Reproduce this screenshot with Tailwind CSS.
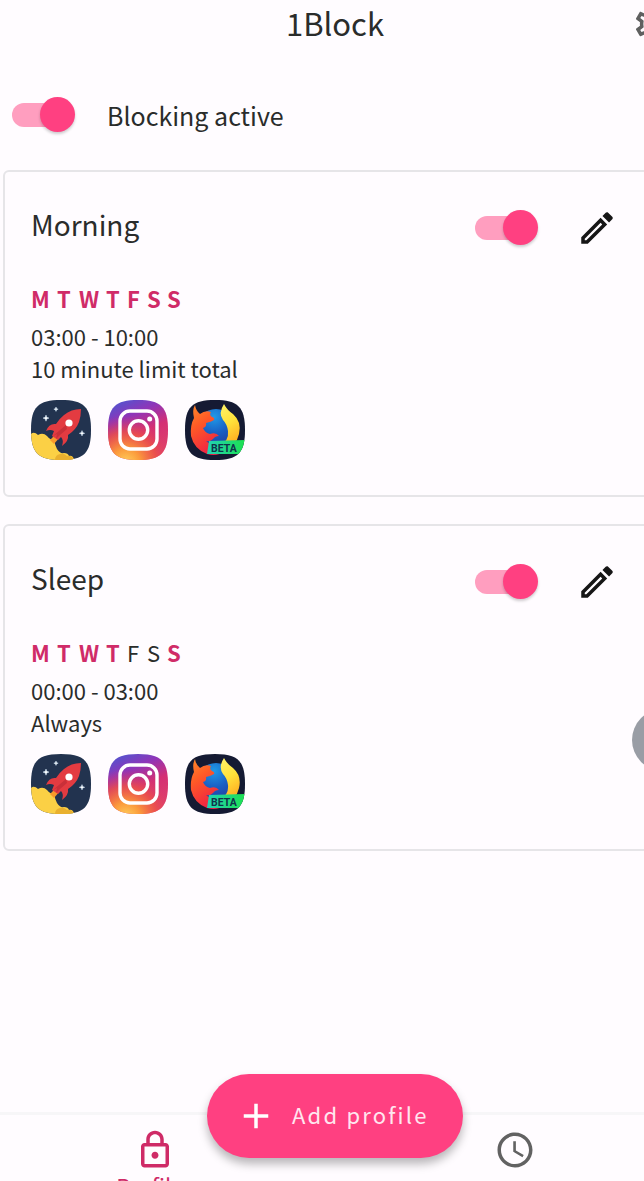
<!DOCTYPE html>
<html lang="en">
<head>
<meta charset="utf-8">
<meta name="viewport" content="width=device-width, initial-scale=1">
<title>1Block</title>
<script src="https://cdn.jsdelivr.net/npm/@tailwindcss/browser@4"></script>
</head>
<body class="bg-[#fffcff] font-['Noto_Sans_CJK_JP','Noto_Sans',sans-serif] text-[#2a2c2b]">

<svg class="absolute size-0" aria-hidden="true">
  <defs>
    <clipPath id="squircle"><path d="M30 0C53 0 60 7 60 30S53 60 30 60 0 53 0 30 7 0 30 0Z"/></clipPath>
    <linearGradient id="ig-base" x1="0.15" y1="0" x2="0.6" y2="1">
      <stop offset="0" stop-color="#4f55d0"/><stop offset=".3" stop-color="#8f35b8"/><stop offset=".6" stop-color="#d42f74"/><stop offset="1" stop-color="#e0436a"/>
    </linearGradient>
    <radialGradient id="ig-glow" cx="0.3" cy="1.05" r="0.8">
      <stop offset="0" stop-color="#ffd15c"/><stop offset=".3" stop-color="#fb9a3c"/><stop offset=".65" stop-color="#ee5245" stop-opacity=".75"/><stop offset="1" stop-color="#d42f74" stop-opacity="0"/>
    </radialGradient>
    <linearGradient id="fx-fox" x1="0" y1="0" x2="0.5" y2="1">
      <stop offset="0" stop-color="#ff8a2a"/><stop offset=".4" stop-color="#ff5a26"/><stop offset="1" stop-color="#ee1f45"/>
    </linearGradient>
    <linearGradient id="fx-tail" x1="0" y1="0" x2="0.3" y2="1">
      <stop offset="0" stop-color="#fff36b"/><stop offset=".5" stop-color="#ffe23a"/><stop offset="1" stop-color="#ffa81f"/>
    </linearGradient>
    <radialGradient id="fx-globe" cx="0.45" cy="0.2" r="0.8">
      <stop offset="0" stop-color="#1f9ae8"/><stop offset=".5" stop-color="#1a60c4"/><stop offset="1" stop-color="#243a9c"/>
    </radialGradient>
    <linearGradient id="fx-beta" x1="0" y1="0" x2="1" y2="0">
      <stop offset="0" stop-color="#22d2b8"/><stop offset="1" stop-color="#1de04f"/>
    </linearGradient>
  </defs>
  <symbol id="edit" viewBox="0 0 24 24"><path d="M14.06 9.02l.92.92L5.92 19H5v-.92l9.06-9.06M17.66 3c-.25 0-.51.1-.7.29l-1.83 1.83 3.75 3.75 1.83-1.83c.39-.39.39-1.02 0-1.41l-2.34-2.34c-.2-.2-.45-.29-.71-.29zm-3.6 3.19L3 17.25V21h3.75L17.81 9.94l-3.75-3.75z"/></symbol>
  <symbol id="rocket" viewBox="0 0 60 60">
    <g clip-path="url(#squircle)">
      <rect width="60" height="60" fill="#22334f"/>
      <path d="M0 34Q3 31 7 35Q12 32 16 36Q19 40 23 40Q24 45 26 49Q29 54 33 53Q37 53 38 56Q42 55 43 60H0Z" fill="#fbd045"/>
      <path d="M24 60Q24 55 29 54Q33 53 36 56Q41 55 43 60Z" fill="#e9b02f"/>
      <path d="M19 40L26 33L29 37L23 44Z" fill="#f79a2b"/>
      <path d="M50 9Q40 9 33 15Q28 19 25 24Q18 23 15 31Q19 29 23 31L21 36L27 40L30 37Q33 40 31 46Q38 41 37 35Q45 30 48 22Q50 16 50 9Z" fill="#e33b41"/>
      <path d="M35 25L22 36L26 34L25 39L29 35L36 29Z" fill="#c93039"/>
      <circle cx="38" cy="23" r="3.600" fill="#fff"/>
      <path d="M15 15l.8 2.300 2.200.8-2.200.8L15 21.200l-.8-2.300-2.200-.8 2.200-.8zM25 7l.6 1.600 1.600.6-1.600.6L25 11.400l-.6-1.600-1.600-.6 1.600-.6zM51 30.600l.7 2 2 .7-2 .7-.7 2-.7-2-2-.7 2-.7z" fill="#fff" stroke="#cfe4f7" stroke-width=".5"/>
    </g>
  </symbol>
  <symbol id="instagram" viewBox="0 0 60 60">
    <g clip-path="url(#squircle)">
      <rect width="60" height="60" fill="url(#ig-base)"/>
      <rect width="60" height="60" fill="url(#ig-glow)"/>
    </g>
    <rect x="12" y="11" width="37" height="38" rx="10" fill="none" stroke="#fff" stroke-width="3.400"/>
    <circle cx="30.500" cy="30" r="9.200" fill="none" stroke="#fff" stroke-width="3.400"/>
    <circle cx="41.700" cy="19" r="2.500" fill="#fff"/>
  </symbol>
  <symbol id="firefox" viewBox="0 0 60 60">
    <g clip-path="url(#squircle)">
      <rect width="60" height="60" fill="#151a33"/>
      <circle cx="31" cy="29" r="20" fill="url(#fx-globe)"/>
      <path d="M39 4Q42 10 48 14Q57 22 54 34Q51 46 41 51L35 45Q44 41 43 31Q42 24 38 20Q33 13 39 4Z" fill="url(#fx-tail)"/>
      <path d="M10 5Q11 11 15 14Q20 10 26 12Q24 15 27 17Q30 18 29 20Q26 22 21 23Q22 27 18 28Q20 33 25 34Q31 32 34 36Q30 36 28 39Q25 42 21 41Q26 46 34 45L40 51Q32 57 22 54Q9 49 6 36Q5 25 9 18Q7 10 10 5Z" fill="url(#fx-fox)"/>
      <path d="M24 41L60 40V54H22Z" fill="url(#fx-beta)"/>
      <text x="26" y="51.500" font-family="Roboto, sans-serif" font-weight="700" font-size="10.500" fill="#10334b">BETA</text>
    </g>
  </symbol>
</svg>

<div class="relative flex h-screen flex-col overflow-hidden">
  <!-- The app surface runs 26px past the right edge of the window -->
  <div class="-mr-[26px] flex min-h-0 flex-1 flex-col">
    <header class="relative flex h-[50px] shrink-0 items-center justify-center">
      <h1 class="pb-1 text-[31px] leading-10">1Block</h1>
      <button type="button" aria-label="Settings" class="absolute top-[3px] -right-1 text-[#606060]">
        <svg class="size-[42px] fill-current" viewBox="0 0 24 24"><path d="M19.43 12.98c.04-.32.07-.64.07-.98 0-.34-.03-.66-.07-.98l2.110-1.650c.19-.15.24-.42.12-.64l-2-3.460c-.09-.16-.26-.25-.44-.25-.06 0-.12.01-.17.03l-2.490 1c-.52-.4-1.080-.73-1.690-.98l-.38-2.650C14.460 2.180 14.250 2 14 2h-4c-.25 0-.46.18-.49.42l-.38 2.650c-.61.25-1.170.59-1.690.98l-2.490-1c-.06-.02-.12-.03-.18-.03-.17 0-.34.09-.43.25l-2 3.460c-.13.22-.07.49.12.64l2.110 1.650c-.04.32-.07.65-.07.98 0 .33.03.66.07.98l-2.110 1.650c-.19.15-.24.42-.12.64l2 3.460c.09.16.26.25.44.25.06 0 .12-.01.17-.03l2.490-1c.52.4 1.080.73 1.690.98l.38 2.650c.03.24.24.42.49.42h4c.25 0 .46-.18.49-.42l.38-2.650c.61-.25 1.170-.59 1.690-.98l2.490 1c.06.02.12.03.18.03.17 0 .34-.09.43-.25l2-3.460c.12-.22.07-.49-.12-.64l-2.110-1.650zm-1.980-1.710c.04.31.05.52.05.73 0 .21-.02.43-.05.73l-.14 1.130.89.7 1.080.84-.7 1.210-1.270-.51-1.040-.42-.9.68c-.43.32-.84.56-1.250.73l-1.060.43-.16 1.130-.2 1.350h-1.400l-.19-1.350-.16-1.130-1.060-.43c-.43-.18-.83-.41-1.230-.71l-.91-.7-1.060.43-1.270.51-.7-1.210 1.080-.84.89-.7-.14-1.130c-.03-.31-.05-.54-.05-.74s.02-.43.05-.73l.14-1.130-.89-.7-1.080-.84.7-1.210 1.270.51 1.040.42.9-.68c.43-.32.84-.56 1.250-.73l1.060-.43.16-1.130.2-1.350h1.390l.19 1.350.16 1.130 1.060.43c.43.18.83.41 1.230.71l.91.7 1.060-.43 1.270-.51.7 1.210-1.070.85-.89.7.14 1.130zM12 8c-2.210 0-4 1.790-4 4s1.790 4 4 4 4-1.790 4-4-1.790-4-4-4z"/></svg>
      </button>
    </header>

    <main class="flex-1 px-[3px] pt-10">
      <label class="flex items-center gap-8 pl-[9px]">
        <input type="checkbox" role="switch" checked class="relative h-[50px] w-[63px] shrink-0 appearance-none before:absolute before:top-[13px] before:left-0 before:h-6 before:w-14 before:rounded-full before:bg-[#ff9ebf] after:absolute after:top-[7px] after:right-0 after:size-[35px] after:rounded-full after:bg-[#ff4081] after:shadow-[0_2px_3px_rgb(0_0_0/0.2)]">
        <span class="text-[25px] leading-8">Blocking active</span>
      </label>

      <section class="mt-[30px] rounded-md border-2 border-[#e6e5e8] pt-6 pr-9 pb-[35px] pl-[26px]">
        <div class="flex h-16 items-center">
          <h2 class="flex-1 pb-2 text-[28px] leading-10">Morning</h2>
          <input type="checkbox" role="switch" aria-label="Morning enabled" checked class="relative mr-[27px] h-[50px] w-[63px] shrink-0 appearance-none before:absolute before:top-[13px] before:left-0 before:h-6 before:w-14 before:rounded-full before:bg-[#ff9ebf] after:absolute after:top-[7px] after:right-0 after:size-[35px] after:rounded-full after:bg-[#ff4081] after:shadow-[0_2px_3px_rgb(0_0_0/0.2)]">
          <button type="button" aria-label="Edit Morning" class="grid size-16 place-items-center"><svg class="size-[42px] fill-[#161616]"><use href="#edit"/></svg></button>
        </div>
        <p class="mt-[22px] grid grid-cols-[26px_22px_27px_21px_20px_20px_20px] text-[22px] leading-8 font-bold text-[#d02b68]"><span>M</span><span>T</span><span>W</span><span>T</span><span>F</span><span>S</span><span>S</span></p>
        <p class="mt-[6px] text-[22px] leading-8">03:00 - 10:00</p>
        <p class="text-[22px] leading-8">10 minute limit total</p>
        <div class="mt-4 flex gap-[17px]">
          <svg class="size-[60px]" role="img" aria-label="Launcher"><use href="#rocket"/></svg>
          <svg class="size-[60px]" role="img" aria-label="Instagram"><use href="#instagram"/></svg>
          <svg class="size-[60px]" role="img" aria-label="Firefox Beta"><use href="#firefox"/></svg>
        </div>
      </section>

      <section class="mt-[27px] rounded-md border-2 border-[#e6e5e8] pt-6 pr-9 pb-[35px] pl-[26px]">
        <div class="flex h-16 items-center">
          <h2 class="flex-1 pb-2 text-[28px] leading-10">Sleep</h2>
          <input type="checkbox" role="switch" aria-label="Sleep enabled" checked class="relative mr-[27px] h-[50px] w-[63px] shrink-0 appearance-none before:absolute before:top-[13px] before:left-0 before:h-6 before:w-14 before:rounded-full before:bg-[#ff9ebf] after:absolute after:top-[7px] after:right-0 after:size-[35px] after:rounded-full after:bg-[#ff4081] after:shadow-[0_2px_3px_rgb(0_0_0/0.2)]">
          <button type="button" aria-label="Edit Sleep" class="grid size-16 place-items-center"><svg class="size-[42px] fill-[#161616]"><use href="#edit"/></svg></button>
        </div>
        <p class="mt-[22px] grid grid-cols-[26px_22px_27px_21px_20px_20px_20px] text-[22px] leading-8 font-bold text-[#d02b68]"><span>M</span><span>T</span><span>W</span><span>T</span><span class="font-normal text-[#2a2c2b]">F</span><span class="font-normal text-[#2a2c2b]">S</span><span>S</span></p>
        <p class="mt-[6px] text-[22px] leading-8">00:00 - 03:00</p>
        <p class="text-[22px] leading-8">Always</p>
        <div class="mt-4 flex gap-[17px]">
          <svg class="size-[60px]" role="img" aria-label="Launcher"><use href="#rocket"/></svg>
          <svg class="size-[60px]" role="img" aria-label="Instagram"><use href="#instagram"/></svg>
          <svg class="size-[60px]" role="img" aria-label="Firefox Beta"><use href="#firefox"/></svg>
        </div>
      </section>
    </main>

    <nav class="relative flex h-[69px] shrink-0 justify-center gap-[280px] border-t-3 border-[#f7f6f8] pt-[14px]">
      <a href="#profiles" aria-current="page" class="flex w-20 flex-col items-center text-[#cf2a67]">
        <svg class="size-[42px] shrink-0 fill-current" viewBox="0 0 24 24"><path d="M18 8h-1V6c0-2.760-2.240-5-5-5S7 3.240 7 6v2H6c-1.100 0-2 .9-2 2v10c0 1.100.9 2 2 2h12c1.100 0 2-.9 2-2V10c0-1.100-.9-2-2-2zM9 6c0-1.660 1.340-3 3-3s3 1.340 3 3v2H9V6zm9 14H6V10h12v10zm-6-3c1.100 0 2-.9 2-2s-.9-2-2-2-2 .9-2 2 .9 2 2 2z"/></svg>
        <span class="text-[22px] leading-7">Profiles</span>
      </a>
      <a href="#usage" aria-label="Usage" class="flex w-20 flex-col items-center text-[#626262]">
        <svg class="size-[42px] shrink-0 fill-current" viewBox="0 0 24 24"><path d="M11.990 2C6.470 2 2 6.480 2 12s4.470 10 9.990 10C17.520 22 22 17.520 22 12S17.520 2 11.990 2zM12 20c-4.420 0-8-3.580-8-8s3.580-8 8-8 8 3.580 8 8-3.580 8-8 8zm.5-13H11v6l5.250 3.150.75-1.230-4.500-2.670z"/></svg>
      </a>
      <button type="button" class="absolute bottom-[23px] left-1/2 flex h-[84px] w-64 -translate-x-1/2 items-center gap-[15px] rounded-full bg-[#ff4081] pl-7 text-[22px] tracking-widest text-[#ffe6ef] shadow-[0_6px_10px_rgb(0_0_0/0.28)]">
        <svg class="size-[42px] shrink-0 fill-white" viewBox="0 0 24 24"><path d="M19 13h-6v6h-2v-6H5v-2h6V5h2v6h6v2z"/></svg>
        <span class="pb-1 whitespace-nowrap">Add profile</span>
      </button>
    </nav>
  </div>

  <button type="button" aria-label="Open side panel" class="absolute top-[709px] -right-[50px] size-[62px] rounded-full bg-[#999da5]"></button>
</div>
</body>
</html>
